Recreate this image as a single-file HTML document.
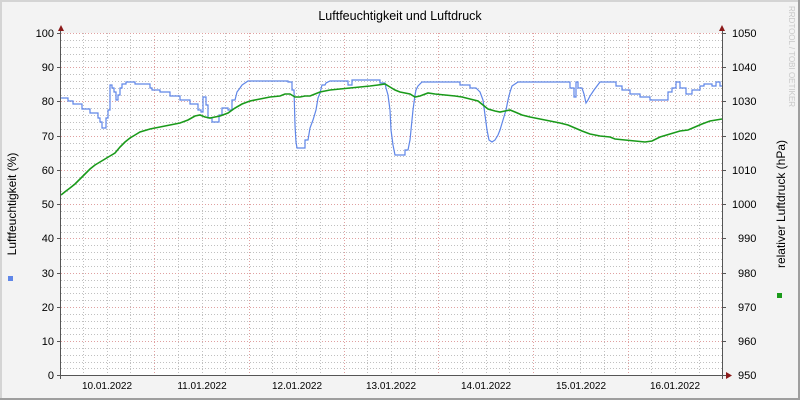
<!DOCTYPE html>
<html><head><meta charset="utf-8"><style>
html,body{margin:0;padding:0;background:#f3f3f3}
svg{display:block}
text{font-family:"Liberation Sans","DejaVu Sans",sans-serif}
</style></head><body>
<svg width="800" height="400" xmlns="http://www.w3.org/2000/svg">
<rect x="0" y="0" width="800" height="400" fill="#f3f3f3"/>
<rect x="0" y="0" width="800" height="2" fill="#d4d4d4"/>
<rect x="0" y="0" width="2" height="400" fill="#d4d4d4"/>
<rect x="0" y="398" width="800" height="2" fill="#9e9e9e"/>
<rect x="798" y="0" width="2" height="400" fill="#9e9e9e"/>
<rect x="61" y="33" width="661" height="342" fill="#fff"/>
<g id="grid" stroke-width="1" fill="none" shape-rendering="crispEdges">
<g stroke="#c0c0c0" stroke-dasharray="1,2">
<path d="M61 40.5H722M61 47.5H722M61 54.5H722M61 61.5H722M61 74.5H722M61 81.5H722M61 88.5H722M61 95.5H722M61 108.5H722M61 115.5H722M61 122.5H722M61 129.5H722M61 143.5H722M61 150.5H722M61 156.5H722M61 163.5H722M61 177.5H722M61 184.5H722M61 191.5H722M61 198.5H722M61 211.5H722M61 218.5H722M61 225.5H722M61 232.5H722M61 245.5H722M61 252.5H722M61 259.5H722M61 266.5H722M61 280.5H722M61 287.5H722M61 293.5H722M61 300.5H722M61 314.5H722M61 321.5H722M61 328.5H722M61 334.5H722M61 348.5H722M61 355.5H722M61 362.5H722M61 368.5H722"/>
<path d="M83.5 33V375M107.5 33V375M130.5 33V375M178.5 33V375M202.5 33V375M225.5 33V375M272.5 33V375M296.5 33V375M320.5 33V375M367.5 33V375M391.5 33V375M415.5 33V375M462.5 33V375M486.5 33V375M509.5 33V375M557.5 33V375M580.5 33V375M604.5 33V375M651.5 33V375M675.5 33V375M699.5 33V375"/>
</g>
<g stroke="#e0a0a0" stroke-dasharray="1,2">
<path d="M61 33.5H722M61 67.5H722M61 101.5H722M61 136.5H722M61 170.5H722M61 204.5H722M61 238.5H722M61 273.5H722M61 307.5H722M61 341.5H722"/>
<path d="M154.5 33V375M249.5 33V375M344.5 33V375M438.5 33V375M533.5 33V375M628.5 33V375"/>
</g>
</g>
<polyline fill="none" stroke="#5f86e8" stroke-width="1.2" points="61,98 68,98 68,101 73,101 73,104 82,104 82,109 90,109 90,113 98,113 98,118 100,118 100,122 102,122 102,128 104,128 104,128 106,128 106,118 108,118 108,110 110,110 110,85 112,85 112,88 114,88 114,92 116,92 116,100 118,100 118,95 120,95 120,88 122,88 122,84 126,84 126,82 135,82 135,84 150,84 150,88 152,88 152,90 160,90 160,92 170,92 170,96 180,96 180,100 190,100 190,104 198,104 198,110 201,110 201,112 203,112 203,97 206,97 206,105 208,105 208,118 212,118 212,122 219,122 219,115 222,115 222,108 228,108 228,110 232,110 232,100 235,100 237,92 240,88 242,85 248,81 288,81 288,82 292,82 292,90 294,90 295,125 296,142 297,148 305,148 305,140 308,140 310,128 313,120 316,110 318,98 320,93 322,85 325,85 326,83 330,81 348,81 348,85 352,85 352,80 380,80 380,83 385,83 386,88 388,95 390,110 391,130 393,145 395,155 405,155 405,150 408,150 410,140 411,130 413,110 415,95 416,90 418,86 422,82 460,82 460,85 470,85 470,88 476,88 478,90 480,92 483,100 485,115 487,130 489,140 492,142 495,140 498,135 500,130 503,120 506,110 508,100 510,92 512,86 518,82 570,82 570,88 574,88 574,97 576,97 576,82 578,82 578,88 582,88 584,94 586,103 588,100 590,96 594,90 600,82 616,82 616,86 622,86 622,90 630,90 630,94 640,94 640,97 650,97 650,100 668,100 668,92 672,92 672,88 676,88 676,82 680,82 680,88 686,88 686,94 692,94 692,90 700,90 700,86 704,86 704,84 712,84 712,86 716,86 716,82 720,82 720,86 722,86"/>
<polyline fill="none" stroke="#1a9a1a" stroke-width="1.6" points="61,195 66,191 70,188 75,184 80,179 85,174 90,169 95,165 100,162 105,159 110,156 115,153 120,147 125,142 130,138 135,135 140,132 150,129 160,127 170,125 180,123 188,120 195,116 200,115 205,117 210,118 215,117 220,116 228,113 235,108 242,104 250,101 260,99 270,97 280,96 285,94 290,94 295,97 300,97 305,96 310,96 315,94 320,92 330,90 340,89 350,88 360,87 370,86 378,85 385,84 390,87 395,90 400,92 410,94 415,97 420,96 428,93 435,94 445,95 455,96 462,97 470,99 478,101 483,105 488,109 495,111 500,112 505,111 510,110 515,112 522,115 530,117 540,119 550,121 560,123 568,125 575,128 582,131 590,134 600,136 610,137 615,139 625,140 635,141 645,142 652,141 660,137 670,134 680,131 688,130 695,127 702,124 710,121 716,120 722,119"/>
<g stroke="#555" stroke-width="1" shape-rendering="crispEdges">
<path d="M60.5 31V379M57 375.5H726M722.5 31V379"/>
<path d="M57 33.5H61M57 67.5H61M57 101.5H61M57 136.5H61M57 170.5H61M57 204.5H61M57 238.5H61M57 273.5H61M57 307.5H61M57 341.5H61"/>
<path d="M722 33.5H726M722 67.5H726M722 101.5H726M722 136.5H726M722 170.5H726M722 204.5H726M722 238.5H726M722 273.5H726M722 307.5H726M722 341.5H726"/>
</g>
<path d="M58 31L61 25L64 31Z" fill="#8b1a1a"/>
<path d="M719 31L722 25L725 31Z" fill="#8b1a1a"/>
<path d="M726 372L732 375.5L726 379Z" fill="#8b1a1a"/>
<g font-size="11" fill="#000" text-anchor="end">
<text x="54" y="37">100</text><text x="54" y="71">90</text><text x="54" y="105">80</text><text x="54" y="140">70</text><text x="54" y="174">60</text><text x="54" y="208">50</text><text x="54" y="242">40</text><text x="54" y="277">30</text><text x="54" y="311">20</text><text x="54" y="345">10</text><text x="54" y="379">0</text>
</g>
<g font-size="11" fill="#000">
<text x="732" y="37">1050</text><text x="732" y="71">1040</text><text x="732" y="105">1030</text><text x="732" y="140">1020</text><text x="732" y="174">1010</text><text x="732" y="208">1000</text><text x="738" y="242">990</text><text x="738" y="277">980</text><text x="738" y="311">970</text><text x="738" y="345">960</text><text x="738" y="379">950</text>
</g>
<g font-size="10" fill="#000" text-anchor="middle">
<text x="107" y="389">10.01.2022</text><text x="202" y="389">11.01.2022</text><text x="297" y="389">12.01.2022</text><text x="391" y="389">13.01.2022</text><text x="486" y="389">14.01.2022</text><text x="581" y="389">15.01.2022</text><text x="675" y="389">16.01.2022</text>
</g>
<text x="400" y="20" font-size="12.5" text-anchor="middle" fill="#000">Luftfeuchtigkeit und Luftdruck</text>
<text transform="translate(16,204) rotate(-90)" font-size="12" text-anchor="middle" fill="#000">Luftfeuchtigkeit (%)</text>
<text transform="translate(785,204) rotate(-90)" font-size="12" text-anchor="middle" fill="#000">relativer Luftdruck (hPa)</text>
<text transform="translate(789,6) rotate(90)" font-size="8" fill="#c8c8c8">RRDTOOL / TOBI OETIKER</text>
<rect x="8" y="276" width="5" height="5" fill="#5f86e8"/>
<rect x="777" y="293" width="5" height="5" fill="#1a9a1a"/>
</svg>
</body></html>
